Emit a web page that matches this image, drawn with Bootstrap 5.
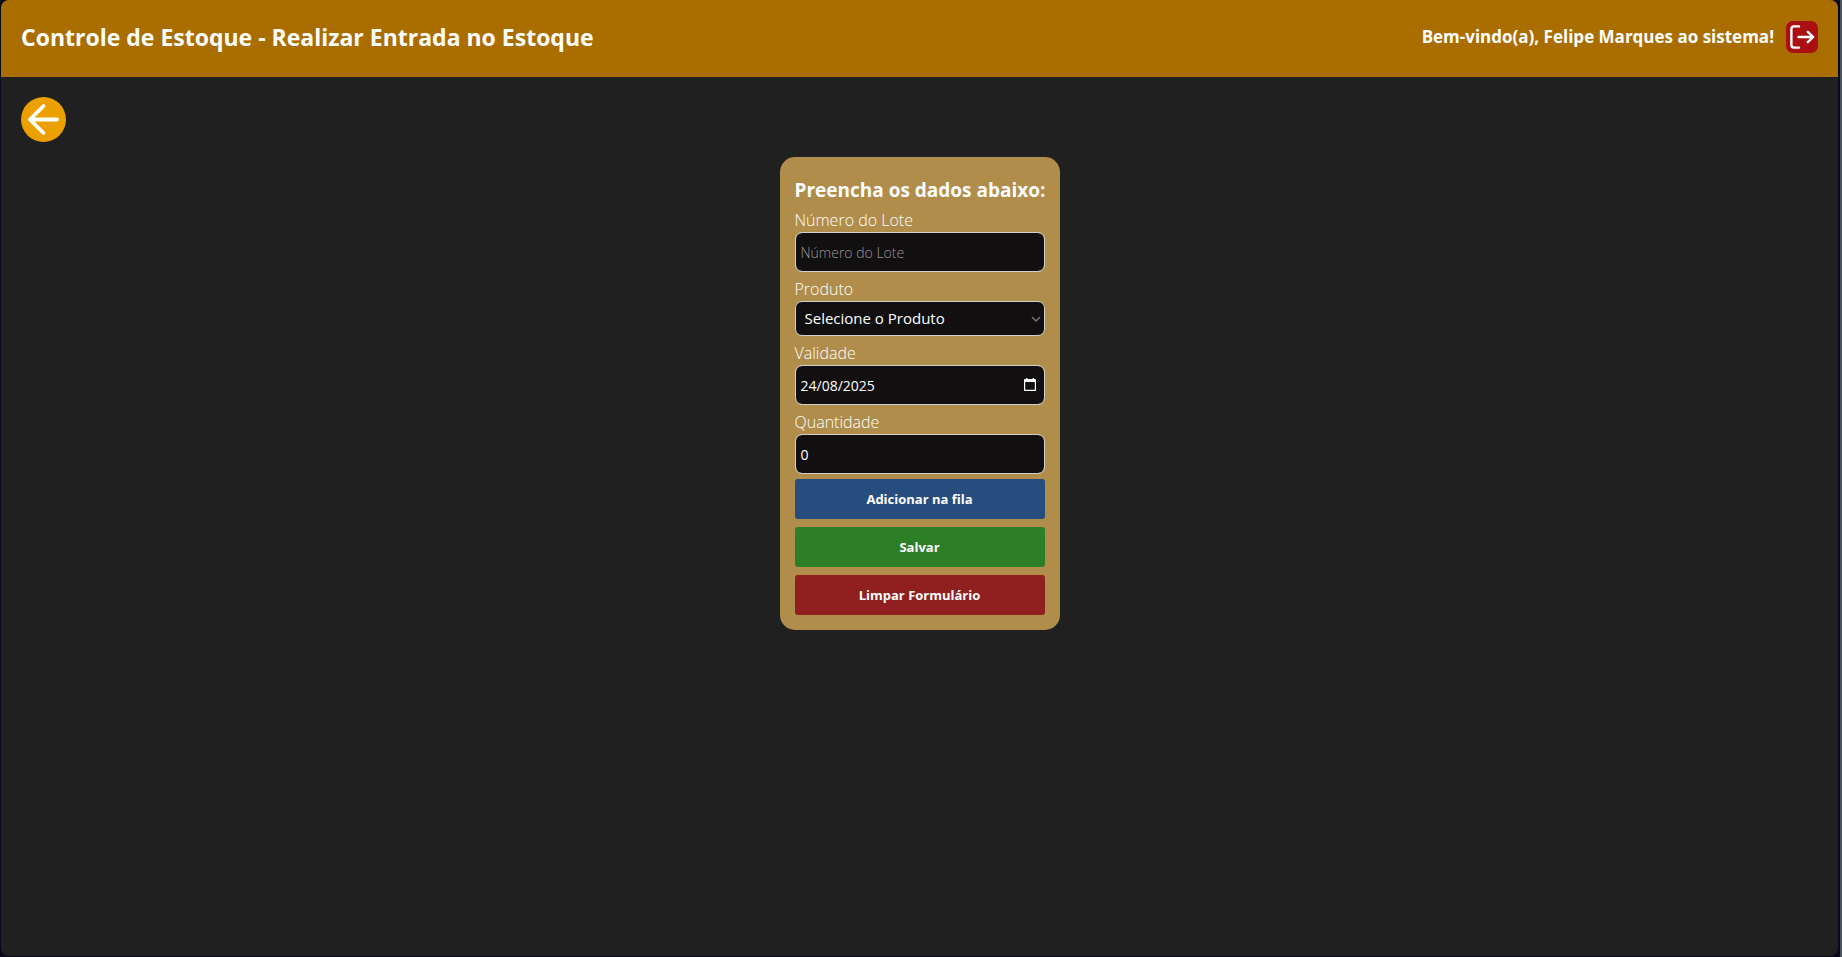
<!DOCTYPE html>
<html lang="pt-BR">
<head>
<meta charset="utf-8">
<meta name="viewport" content="width=device-width, initial-scale=1">
<title>Controle de Estoque</title>
<link href="https://cdn.jsdelivr.net/npm/bootstrap@5.3.0/dist/css/bootstrap.min.css" rel="stylesheet">
<style>
  body { font-family: "Open Sans", "Noto Sans", sans-serif; background: #070a1b; color: #fff; border-right: 2px solid #4a545e; }
  .app-shell { background: #202020; border-radius: 8px; margin: 0 2px 1px 1px; min-height: calc(100vh - 1px); overflow: hidden; }
  .app-header { background: #aa6e00; min-height: 77px; padding: 0 20px 3px; }
  .app-title { font-size: 23px; line-height: 32px; }
  .welcome { font-size: 17px; line-height: 24px; }
  .btn-logout { width: 32px; height: 32px; background: #aa0f12; border-radius: 7px; }
  .app-main { padding: 20px 20px; }
  .btn-back { width: 45px; height: 45px; background: #eba000; }
  .stock-form { background: #b08d4b; width: 280px; border-radius: 15px; padding: 15px; margin-top: 15px; }
  .form-title { font-size: 19px; line-height: 36px; }
  .stock-form .form-label { color: #fff; font-size: 16px; line-height: 24px; font-weight: 300; margin: 0; display: block; }
  .stock-form .form-control, .stock-form .form-select {
    color: #fff; background-color: #110f10; border: 1px solid #d0d0d0; border-radius: 7px; margin-bottom: 5px;
  }
  .stock-form .form-control { height: 40px; font-size: 14px; padding: 1px 5px; }
  .stock-form .form-control::placeholder { color: #9a9898; font-weight: 300; }
  .stock-form .form-select {
    height: 35px; font-size: 15px; padding: 0 20px 0 9px;
    background-image: url("data:image/svg+xml,%3Csvg xmlns='http://www.w3.org/2000/svg' viewBox='0 0 10 6'%3E%3Cpath d='M1 1l4 4 4-4' fill='none' stroke='%23757373' stroke-width='1.5'/%3E%3C/svg%3E");
    background-size: 10px 6px; background-position: right 3px center;
  }
  .calendar-icon { right: 9px; top: 13px; }
  .btn-action { height: 40px; font-size: 13px; line-height: 20px; font-weight: 700; color: #fff; border: 0; border-radius: 3px; padding: 0; }
  .btn-queue { background: #274d7f; }
  .btn-save { background: #2d7f27; }
  .btn-clear { background: #902020; }
</style>
</head>
<body>
<div class="app-shell d-flex flex-column">
  <header class="app-header d-flex align-items-center justify-content-between">
    <h1 class="app-title fw-bold m-0">Controle de Estoque - Realizar Entrada no Estoque</h1>
    <div class="d-flex align-items-center gap-2">
      <span class="welcome fw-bold">Bem-vindo(a), Felipe Marques ao sistema!</span>
      <button type="button" class="btn-logout border-0 p-0 d-flex ms-1" aria-label="Sair">
        <svg width="32" height="32" viewBox="0 0 32 32" fill="none" stroke="#fff" stroke-width="2.4" stroke-linecap="round" stroke-linejoin="round"><path d="M13 5.4H8q-2.600 0-2.600 2.600v16q0 2.600 2.600 2.600h5M12.500 16H27M21.800 10.800 27.200 16l-5.400 5.200"/></svg>
      </button>
    </div>
  </header>
  <main class="app-main">
    <a href="#" class="btn-back rounded-circle d-flex" aria-label="Voltar">
      <svg width="45" height="45" viewBox="0 0 45 45" fill="none" stroke="#fff" stroke-width="3.8" stroke-linecap="round" stroke-linejoin="round"><path d="M36 22.500H9M22.500 9 9 22.500 22.500 36"/></svg>
    </a>
    <form class="stock-form mx-auto">
      <h2 class="form-title fw-bold m-0 text-nowrap">Preencha os dados abaixo:</h2>
      <label class="form-label" for="lote">Número do Lote</label>
      <input class="form-control" type="text" id="lote" placeholder="Número do Lote">
      <label class="form-label" for="produto">Produto</label>
      <select class="form-select" id="produto"><option>Selecione o Produto</option></select>
      <label class="form-label" for="validade">Validade</label>
      <div class="position-relative">
        <input class="form-control" type="text" id="validade" inputmode="numeric" value="24/08/2025">
        <svg class="calendar-icon position-absolute" width="12" height="13" viewBox="0 0 12 13" aria-hidden="true"><path fill="#fff" fill-rule="evenodd" d="M2 0h1.400v1h5.200V0H10v1h1.200q.8 0 .8.8v10.400q0 .8-.8.8H.8q-.8 0-.8-.8V1.800Q0 1 .8 1H2zM1.200 4v7.800h9.600V4z"/></svg>
      </div>
      <label class="form-label" for="quantidade">Quantidade</label>
      <input class="form-control" type="text" inputmode="numeric" id="quantidade" value="0">
      <div class="d-grid gap-2">
        <button type="button" class="btn btn-action btn-queue">Adicionar na fila</button>
        <button type="button" class="btn btn-action btn-save">Salvar</button>
        <button type="reset" class="btn btn-action btn-clear">Limpar Formulário</button>
      </div>
    </form>
  </main>
</div>
<script src="https://cdn.jsdelivr.net/npm/bootstrap@5.3.0/dist/js/bootstrap.bundle.min.js"></script>
</body>
</html>
